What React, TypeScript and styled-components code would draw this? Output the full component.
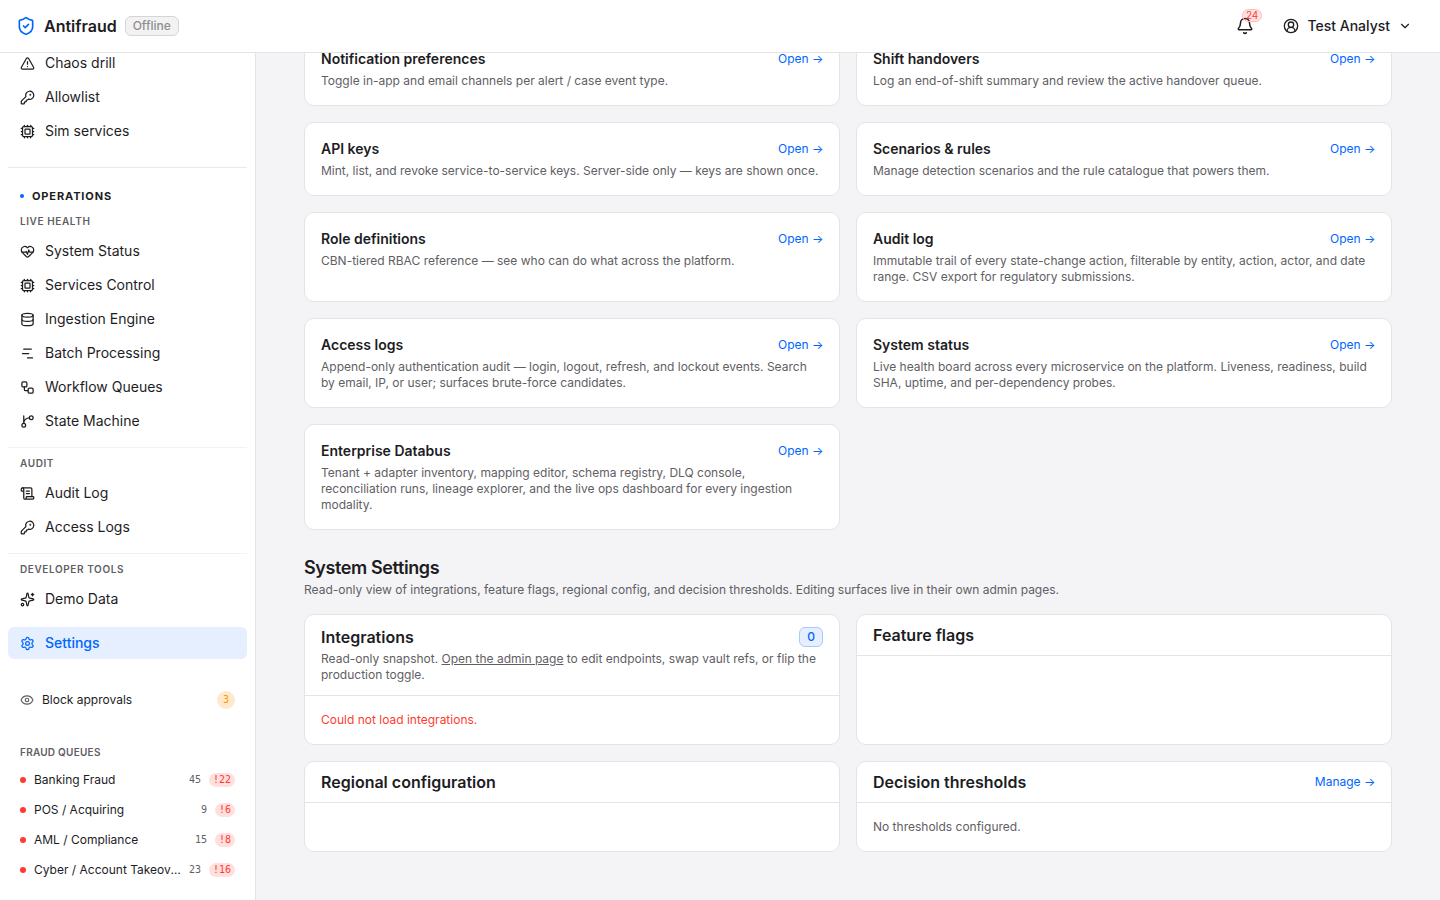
import React from "react";
import styled, { createGlobalStyle, css } from "styled-components";
import {
  Bell,
  ChartNoAxesGantt,
  ChevronDown,
  CircleUserRound,
  Cpu,
  Database,
  Eye,
  HeartPulse,
  KeyRound,
  ScrollText,
  Settings,
  ShieldCheck,
  Sparkles,
  TriangleAlert,
  Workflow,
} from "lucide-react";

const c = {
  text: "#1d1d1f",
  muted: "#5f6064",
  blue: "#0066ff",
  red: "#ff3b30",
  line: "#e4e4e7",
  bg: "#f4f4f7",
};

const mono = `"DejaVu Sans Mono", monospace`;

const GlobalStyle = createGlobalStyle`
  *, *::before, *::after { box-sizing: border-box; }
  body {
    margin: 0;
    background: ${c.bg};
    color: ${c.text};
    font-family: Inter, "Liberation Sans", sans-serif;
    font-size: 14px;
    -webkit-font-smoothing: antialiased;
  }
  h1, h2, h3, p { margin: 0; }
  a { color: inherit; }
`;

const Shell = styled.div`
  height: 900px;
  display: flex;
  flex-direction: column;
  overflow: hidden;
`;

const TopBar = styled.header`
  flex: none;
  height: 53px;
  padding: 0 16px;
  display: flex;
  align-items: center;
  justify-content: space-between;
  background: #fff;
  border-bottom: 1px solid ${c.line};
`;

const Brand = styled.div`
  display: flex;
  align-items: center;
  gap: 8px;
  svg { color: ${c.blue}; }
`;

const BrandName = styled.span`
  font-size: 16px;
  line-height: 24px;
  font-weight: 600;
`;

const Badge = styled.span<{ $tone: "neutral" | "info" }>`
  display: inline-flex;
  align-items: center;
  height: 20px;
  padding: 0 7px;
  border-radius: 6px;
  border: 1px solid;
  font-size: 12px;
  line-height: 16px;
  font-weight: 500;
  ${(p) =>
    p.$tone === "info"
      ? css`color: ${c.blue}; background: #e5efff; border-color: #a6c9ff;`
      : css`color: #8e8e93; background: #f2f2f2; border-color: #d5d5d7;`}
`;

const TopActions = styled.div`
  display: flex;
  align-items: center;
  gap: 8px;
`;

const BellButton = styled.button`
  position: relative;
  width: 36px;
  height: 36px;
  padding: 0;
  border: 0;
  background: none;
  color: inherit;
  display: grid;
  place-items: center;
`;

const BellCount = styled.span`
  position: absolute;
  top: 1px;
  left: 15px;
  height: 13px;
  padding: 0 2.5px;
  border: 1px solid #ffbcb8;
  border-radius: 7px;
  background: rgba(255, 59, 48, 0.14);
  color: ${c.red};
  font: 400 10px/11px Inter, sans-serif;
`;

const UserButton = styled.button`
  height: 36px;
  padding: 0 12px;
  display: flex;
  align-items: center;
  gap: 8px;
  border: 0;
  background: none;
  color: inherit;
  font: 500 14px/20px Inter, sans-serif;
`;

const Body = styled.div`
  flex: 1;
  min-height: 0;
  display: flex;
`;

const Sidebar = styled.aside`
  flex: none;
  width: 256px;
  padding: 0 8px;
  overflow: hidden;
  background: #fff;
  border-right: 1px solid ${c.line};
`;

const SidebarScroll = styled.div`
  margin-top: -6px;
`;

const NavList = styled.nav`
  display: flex;
  flex-direction: column;
  gap: 2px;
`;

const NavRow = styled.a<{ $active?: boolean }>`
  height: 32px;
  padding: 0 12px;
  display: flex;
  align-items: center;
  gap: 10px;
  border-radius: 6px;
  font-size: 14px;
  line-height: 20px;
  ${(p) => p.$active && css`
    margin-top: 12px;
    background: #e5efff;
    color: ${c.blue};
    font-weight: 500;
  `}
`;

const Divider = styled.div<{ $major?: boolean }>`
  height: 1px;
  margin-top: ${(p) => (p.$major ? 20 : 10)}px;
  background: ${(p) => (p.$major ? "#e9e9eb" : "#f2f2f4")};
`;

const ZoneTitle = styled.h2`
  margin-top: 20px;
  padding: 0 12px;
  display: flex;
  align-items: center;
  gap: 8px;
  font-size: 11px;
  line-height: 16px;
  font-weight: 700;
  letter-spacing: 0.08em;
  &::before {
    content: "";
    width: 4px;
    height: 4px;
    border-radius: 50%;
    background: ${c.blue};
  }
`;

const GroupTitle = styled.h3<{ $top: number; $bottom?: number; $tight?: boolean }>`
  margin-top: ${(p) => p.$top}px;
  margin-bottom: ${(p) => p.$bottom ?? 6}px;
  padding: 0 12px;
  font-size: 10px;
  line-height: 16px;
  font-weight: 600;
  letter-spacing: ${(p) => (p.$tight ? 0.025 : 0.06)}em;
  color: ${c.muted};
`;

const Approvals = styled.a`
  height: 32px;
  margin-top: 25px;
  padding: 0 12px;
  display: flex;
  align-items: center;
  gap: 8px;
  font-size: 12px;
  line-height: 16px;
  svg { color: ${c.muted}; }
`;

const ApprovalCount = styled.span`
  margin-left: auto;
  width: 18px;
  height: 18px;
  border-radius: 9px;
  background: #ffe9cc;
  color: #ff9500;
  font: 10px/18px ${mono};
  text-align: center;
`;

const QueueRow = styled.a`
  height: 30px;
  padding: 0 12px;
  display: flex;
  align-items: center;
  gap: 8px;
  font-size: 12px;
  line-height: 16px;
`;

const QueueDot = styled.i`
  flex: none;
  width: 6px;
  height: 6px;
  border-radius: 50%;
  background: ${c.red};
`;

const QueueName = styled.span`
  flex: 1;
  min-width: 0;
  overflow: hidden;
  white-space: nowrap;
  text-overflow: ellipsis;
`;

const QueueTotal = styled.span`
  font: 10px/14px ${mono};
  letter-spacing: -0.05px;
  color: ${c.muted};
`;

const QueueUrgent = styled.span`
  padding: 0 4px;
  border-radius: 7px;
  background: #ffe0de;
  color: ${c.red};
  font: 10px/14px ${mono};
  letter-spacing: -0.05px;
`;

const Main = styled.main`
  flex: 1;
  min-width: 0;
  padding: 0 48px;
  overflow: hidden;
`;

const MainScroll = styled.div`
  margin-top: -21px;
`;

const CardGrid = styled.section`
  display: grid;
  grid-template-columns: 1fr 1fr;
  gap: 16px;
`;

const Card = styled.article<{ $padded?: boolean }>`
  background: #fff;
  border: 1px solid ${c.line};
  border-radius: 10px;
  padding: ${(p) => (p.$padded ? 16 : 0)}px;
`;

const CardTop = styled.div`
  display: flex;
  align-items: center;
  justify-content: space-between;
`;

const CardTitle = styled.h3`
  font-size: 14px;
  line-height: 20px;
  font-weight: 600;
`;

const PanelTitle = styled.h3`
  font-size: 16px;
  line-height: 16px;
  font-weight: 600;
`;

const CardLink = styled.a`
  margin-right: -0.4px;
  color: ${c.blue};
  font-size: 12px;
  line-height: 16px;
`;

const Note = styled.p<{ $gap?: number; $error?: boolean }>`
  margin-top: ${(p) => p.$gap ?? 0}px;
  font-size: 12px;
  line-height: 16px;
  color: ${(p) => (p.$error ? c.red : c.muted)};
`;

const SectionHead = styled.div`
  margin: 26px 0 16px;
`;

const SectionTitle = styled.h2`
  font-size: 18px;
  line-height: 24px;
  font-weight: 600;
  letter-spacing: -0.022em;
`;

const PanelHead = styled.div`
  padding: 12px 16px;
  border-bottom: 1px solid ${c.line};
`;

const PanelBody = styled.div`
  min-height: 48px;
  padding: 16px;
`;

function BranchIcon({ size = 15 }: { size?: number }) {
  return (
    <svg
      width={size}
      height={size}
      viewBox="0 0 24 24"
      fill="none"
      stroke="currentColor"
      strokeWidth={2}
      strokeLinecap="round"
      strokeLinejoin="round"
    >
      <path d="M15 6a9 9 0 0 0-9 9V3" />
      <circle cx="18" cy="6" r="3" />
      <circle cx="6" cy="18" r="3" />
    </svg>
  );
}

type NavEntry = [React.ComponentType<{ size?: number }>, string];

const simulation: NavEntry[] = [
  [TriangleAlert, "Chaos drill"],
  [KeyRound, "Allowlist"],
  [Cpu, "Sim services"],
];
const liveHealth: NavEntry[] = [
  [HeartPulse, "System Status"],
  [Cpu, "Services Control"],
  [Database, "Ingestion Engine"],
  [ChartNoAxesGantt, "Batch Processing"],
  [Workflow, "Workflow Queues"],
  [BranchIcon, "State Machine"],
];
const audit: NavEntry[] = [
  [ScrollText, "Audit Log"],
  [KeyRound, "Access Logs"],
];
const developer: NavEntry[] = [[Sparkles, "Demo Data"]];

const queues: [string, number, number][] = [
  ["Banking Fraud", 45, 22],
  ["POS / Acquiring", 9, 6],
  ["AML / Compliance", 15, 8],
  ["Cyber / Account Takeover", 23, 16],
];

const destinations: [string, string][] = [
  ["Notification preferences", "Toggle in-app and email channels per alert / case event type."],
  ["Shift handovers", "Log an end-of-shift summary and review the active handover queue."],
  ["API keys", "Mint, list, and revoke service-to-service keys. Server-side only — keys are shown once."],
  ["Scenarios & rules", "Manage detection scenarios and the rule catalogue that powers them."],
  ["Role definitions", "CBN-tiered RBAC reference — see who can do what across the platform."],
  ["Audit log", "Immutable trail of every state-change action, filterable by entity, action, actor, and date range. CSV export for regulatory submissions."],
  ["Access logs", "Append-only authentication audit — login, logout, refresh, and lockout events. Search by email, IP, or user; surfaces brute-force candidates."],
  ["System status", "Live health board across every microservice on the platform. Liveness, readiness, build SHA, uptime, and per-dependency probes."],
  ["Enterprise Databus", "Tenant + adapter inventory, mapping editor, schema registry, DLQ console, reconciliation runs, lineage explorer, and the live ops dashboard for every ingestion modality."],
];

function Nav({ items }: { items: NavEntry[] }) {
  return (
    <NavList>
      {items.map(([Icon, label]) => (
        <NavRow key={label}>
          <Icon size={15} />
          {label}
        </NavRow>
      ))}
    </NavList>
  );
}

export default function App() {
  return (
    <Shell>
      <GlobalStyle />
      <TopBar>
        <Brand>
          <ShieldCheck size={20} />
          <BrandName>Antifraud</BrandName>
          <Badge $tone="neutral">Offline</Badge>
        </Brand>
        <TopActions>
          <BellButton aria-label="Notifications">
            <Bell size={18} />
            <BellCount>24</BellCount>
          </BellButton>
          <UserButton>
            <CircleUserRound size={16} />
            Test Analyst
            <ChevronDown size={14} />
          </UserButton>
        </TopActions>
      </TopBar>
      <Body>
        <Sidebar>
          <SidebarScroll>
            <Nav items={simulation} />
            <Divider $major />
            <ZoneTitle>OPERATIONS</ZoneTitle>
            <GroupTitle $top={9}>LIVE HEALTH</GroupTitle>
            <Nav items={liveHealth} />
            <Divider />
            <GroupTitle $top={7}>AUDIT</GroupTitle>
            <Nav items={audit} />
            <Divider />
            <GroupTitle $top={7}>DEVELOPER TOOLS</GroupTitle>
            <Nav items={developer} />
            <NavRow $active>
              <Settings size={15} />
              Settings
            </NavRow>
            <Approvals>
              <Eye size={14} />
              Block approvals
              <ApprovalCount>3</ApprovalCount>
            </Approvals>
            <GroupTitle $top={28} $bottom={5} $tight>FRAUD QUEUES</GroupTitle>
            {queues.map(([name, total, urgent]) => (
              <QueueRow key={name}>
                <QueueDot />
                <QueueName>{name}</QueueName>
                <QueueTotal>{total}</QueueTotal>
                <QueueUrgent>!{urgent}</QueueUrgent>
              </QueueRow>
            ))}
          </SidebarScroll>
        </Sidebar>
        <Main>
          <MainScroll>
            <CardGrid>
              {destinations.map(([title, note]) => (
                <Card key={title} $padded>
                  <CardTop>
                    <CardTitle>{title}</CardTitle>
                    <CardLink>Open →</CardLink>
                  </CardTop>
                  <Note $gap={4}>{note}</Note>
                </Card>
              ))}
            </CardGrid>
            <SectionHead>
              <SectionTitle>System Settings</SectionTitle>
              <Note $gap={2}>
                Read-only view of integrations, feature flags, regional config, and decision thresholds. Editing surfaces live in their own admin pages.
              </Note>
            </SectionHead>
            <CardGrid>
              <Card>
                <PanelHead>
                  <CardTop>
                    <PanelTitle>Integrations</PanelTitle>
                    <Badge $tone="info">0</Badge>
                  </CardTop>
                  <Note $gap={4}>
                    Read-only snapshot. <u>Open the admin page</u> to edit endpoints, swap vault refs, or flip the production toggle.
                  </Note>
                </PanelHead>
                <PanelBody>
                  <Note $error>Could not load integrations.</Note>
                </PanelBody>
              </Card>
              <Card>
                <PanelHead>
                  <PanelTitle>Feature flags</PanelTitle>
                </PanelHead>
                <PanelBody />
              </Card>
              <Card>
                <PanelHead>
                  <PanelTitle>Regional configuration</PanelTitle>
                </PanelHead>
                <PanelBody />
              </Card>
              <Card>
                <PanelHead>
                  <CardTop>
                    <PanelTitle>Decision thresholds</PanelTitle>
                    <CardLink>Manage →</CardLink>
                  </CardTop>
                </PanelHead>
                <PanelBody>
                  <Note>No thresholds configured.</Note>
                </PanelBody>
              </Card>
            </CardGrid>
          </MainScroll>
        </Main>
      </Body>
    </Shell>
  );
}
